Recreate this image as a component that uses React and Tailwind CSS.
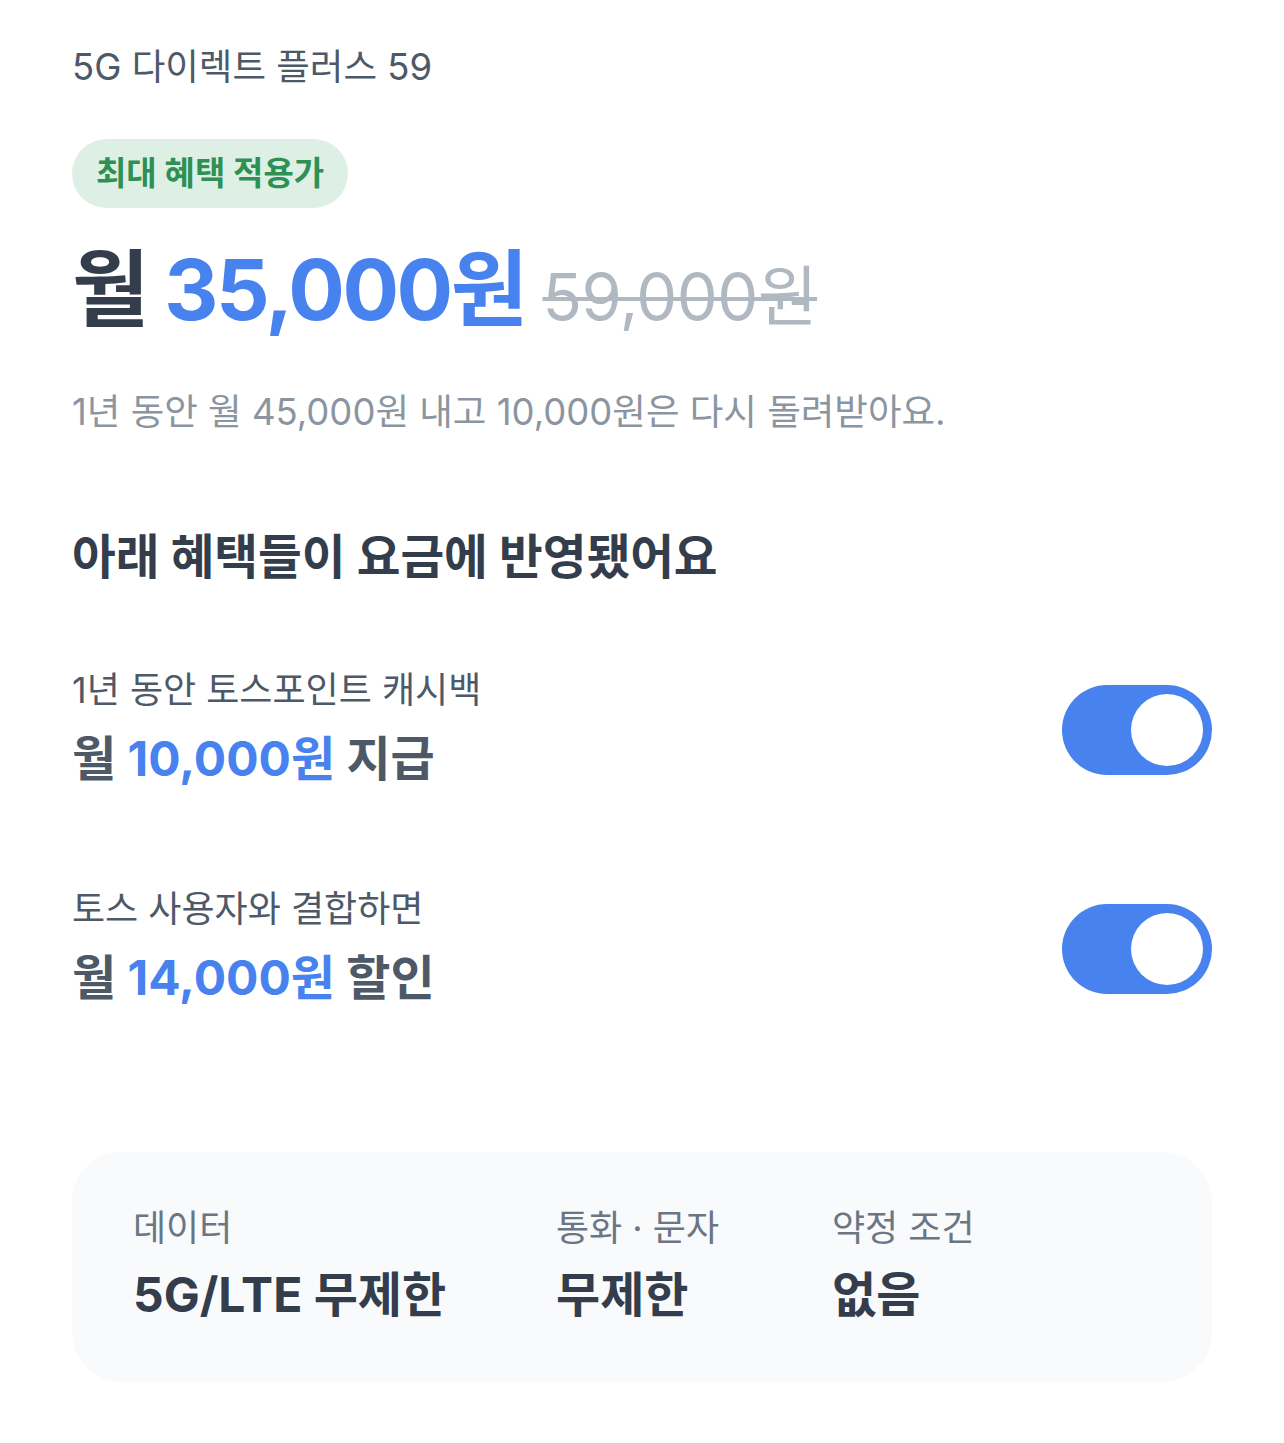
import React, { useState } from "react";

function Toggle({ on, onChange }) {
  return (
    <button
      type="button"
      onClick={() => onChange(!on)}
      className={
        "mt-[11px] flex h-[90px] w-[150px] shrink-0 items-center rounded-full p-[9px] transition-colors " +
        (on ? "justify-end bg-[#4782ee]" : "justify-start bg-[#e5e8eb]")
      }
    >
      <span className="block h-[72px] w-[72px] rounded-full bg-white" />
    </button>
  );
}

function Benefit({ label, amount, suffix, on, onChange }) {
  return (
    <div className="flex items-center justify-between">
      <div>
        <p className="text-[36px] leading-[48px] text-[#4e5968]">{label}</p>
        <p className="mt-[21px] text-[48px] font-bold leading-[48px] text-[#4e5968]">
          월 <span className="text-[#4782ee]">{amount}</span> {suffix}
        </p>
      </div>
      <Toggle on={on} onChange={onChange} />
    </div>
  );
}

export default function App() {
  const [cashback, setCashback] = useState(true);
  const [bundle, setBundle] = useState(true);

  return (
    <div
      className="min-h-[1443px] bg-white px-[72px] pt-[45px]"
      style={{ fontFamily: '"Inter", "Noto Sans CJK KR", sans-serif' }}
    >
      <h1 className="text-[36.5px] leading-[44px] text-[#4e5968]">5G 다이렉트 플러스 59</h1>

      <span className="mt-[50px] inline-flex h-[69px] items-center rounded-full bg-[#def0e6] px-[24px] text-[33px] font-bold text-[#2e9153]">
        최대 혜택 적용가
      </span>

      <div className="mt-[32px] flex items-baseline gap-[17px] leading-[100px]">
        <p className="text-[84px] font-bold tracking-[-2.5px] text-[#333d4b]">
          월 <span className="text-[#4782ee]">35,000원</span>
        </p>
        <p className="text-[65px] tracking-[-0.5px] text-[#b0b8c1] line-through decoration-[4px]">59,000원</p>
      </div>

      <p className="mt-[41px] text-[36.5px] leading-[48px] text-[#8b95a1]">
        1년 동안 월 45,000원 내고 10,000원은 다시 돌려받아요.
      </p>

      <h2 className="mt-[93px] text-[47.5px] font-bold leading-[56px] text-[#333d4b]">
        아래 혜택들이 요금에 반영됐어요
      </h2>

      <div className="mt-[81px] flex flex-col gap-[102px]">
        <Benefit
          label="1년 동안 토스포인트 캐시백"
          amount="10,000원"
          suffix="지급"
          on={cashback}
          onChange={setCashback}
        />
        <Benefit
          label="토스 사용자와 결합하면"
          amount="14,000원"
          suffix="할인"
          on={bundle}
          onChange={setBundle}
        />
      </div>

      <div className="mt-[150px] flex rounded-[50px] bg-[#f9fafb] px-[61px] pb-[61px] pt-[52px]">
        <div className="w-[423px]">
          <p className="text-[36px] leading-[48px] text-[#6b7684]">데이터</p>
          <p className="mt-[17px] text-[48px] font-bold leading-[52px] text-[#333d4b]">5G/LTE 무제한</p>
        </div>
        <div className="w-[276px]">
          <p className="text-[36px] leading-[48px] text-[#6b7684]">통화 · 문자</p>
          <p className="mt-[17px] text-[48px] font-bold leading-[52px] text-[#333d4b]">무제한</p>
        </div>
        <div>
          <p className="text-[36px] leading-[48px] text-[#6b7684]">약정 조건</p>
          <p className="mt-[17px] text-[48px] font-bold leading-[52px] text-[#333d4b]">없음</p>
        </div>
      </div>
    </div>
  );
}
